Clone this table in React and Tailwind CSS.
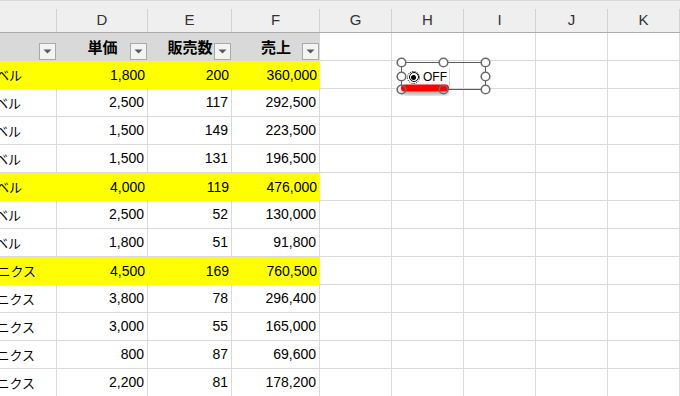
import React from 'react';

const COLS = ['', 'D', 'E', 'F', 'G', 'H', 'I', 'J', 'K'];
const GRID = 'grid grid-cols-[57px_91px_84px_88px_72px_72px_72px_72px_72px]';

const rows = [
  { name: 'トラベル', price: '1,800', qty: '200', total: '360,000', hi: true },
  { name: 'トラベル', price: '2,500', qty: '117', total: '292,500' },
  { name: 'トラベル', price: '1,500', qty: '149', total: '223,500' },
  { name: 'トラベル', price: '1,500', qty: '131', total: '196,500' },
  { name: 'トラベル', price: '4,000', qty: '119', total: '476,000', hi: true },
  { name: 'トラベル', price: '2,500', qty: '52', total: '130,000' },
  { name: 'トラベル', price: '1,800', qty: '51', total: '91,800' },
  { name: 'エレクトロニクス', price: '4,500', qty: '169', total: '760,500', hi: true },
  { name: 'エレクトロニクス', price: '3,800', qty: '78', total: '296,400' },
  { name: 'エレクトロニクス', price: '3,000', qty: '55', total: '165,000' },
  { name: 'エレクトロニクス', price: '800', qty: '87', total: '69,600' },
  { name: 'エレクトロニクス', price: '2,200', qty: '81', total: '178,200' },
];

function FilterButton() {
  return (
    <div className="col-start-1 row-start-1 self-end justify-self-end mr-px mb-px w-[17px] h-[17px] border border-[#a9a9a9] bg-[#f3f3f3] flex items-center justify-center">
      <svg width="9" height="5" viewBox="0 0 9 5">
        <path d="M0.5 0.5 L8.5 0.5 L4.5 4.5 Z" fill="#595959" />
      </svg>
    </div>
  );
}

function FilterCell({ label }) {
  return (
    <div className="grid h-[28px] bg-[#d9d9d9]">
      {label && (
        <span className="col-start-1 row-start-1 place-self-center font-bold text-[15px] text-black font-['Noto_Sans_CJK_JP',sans-serif]">
          {label}
        </span>
      )}
      <FilterButton />
    </div>
  );
}

function EmptyCells({ n }) {
  return Array.from({ length: n }).map((_, i) => (
    <div key={i} className="h-[28px] border-r border-b border-[#dadada] bg-white" />
  ));
}

function DataRow({ r }) {
  const cell = r.hi
    ? 'h-[28px] bg-[#ffff00]'
    : 'h-[28px] border-r border-b border-[#dadada] bg-white';
  const mr = r.name === 'トラベル' ? 'mr-[35px]' : 'mr-[21px]';
  return (
    <>
      <div className={`${cell} flex items-center justify-end overflow-hidden`}>
        <span className={`${mr} whitespace-nowrap text-[13px] text-black font-['Noto_Sans_CJK_JP',sans-serif]`}>{r.name}</span>
      </div>
      <div className={`${cell} flex items-center justify-end pr-[3px] text-[14px] text-black`}>{r.price}</div>
      <div className={`${cell} flex items-center justify-end pr-[3px] text-[14px] text-black`}>{r.qty}</div>
      <div className={`${cell} flex items-center justify-end pr-[3px] text-[14px] text-black`}>{r.total}</div>
      <EmptyCells n={5} />
    </>
  );
}

function RadioControl() {
  const handles = [
    [6, 6], [48, 6], [90, 6],
    [6, 20], [90, 20],
    [6, 33], [48, 33], [90, 33],
  ];
  return (
    <div className="absolute left-[395px] top-[56px] w-[97px] h-[40px]">
      <div className="absolute left-[12px] top-[12px] flex items-center gap-[3px] bg-white pr-[2px] border-r border-[#d8d8d8]">
        <span className="w-[13px] h-[13px] rounded-full border border-dotted border-black flex items-center justify-center">
          <span className="w-[10px] h-[10px] rounded-full border border-black flex items-center justify-center">
            <span className="w-[5px] h-[5px] rounded-full bg-black" />
          </span>
        </span>
        <span className="text-[12px] leading-[18px] text-black">OFF</span>
      </div>
      <svg className="absolute inset-0" width="97" height="40" viewBox="0 0 97 40">
        <defs>
          <filter id="sh" filterUnits="userSpaceOnUse" x="0" y="20" width="70" height="20">
            <feDropShadow dx="0" dy="3" stdDeviation="2" floodColor="#000" floodOpacity="0.35" />
          </filter>
        </defs>
        <rect x="6.5" y="6.5" width="84" height="27" fill="none" stroke="#5c5c5c" strokeWidth="1" />
        {handles.map(([x, y], i) => (
          <circle key={i} cx={x + 0.5} cy={y + 0.5} r="4.3" fill="#fff" />
        ))}
        <rect x="6" y="28.5" width="48" height="7" rx="3.5" fill="#ff0000" filter="url(#sh)" />
        {handles.map(([x, y], i) => (
          <circle key={i} cx={x + 0.5} cy={y + 0.5} r="4.3" fill="none" stroke="#6b6b6b" strokeWidth="1.6" />
        ))}
      </svg>
    </div>
  );
}

export default function App() {
  return (
    <div className="relative w-[680px] h-[396px] overflow-hidden bg-white font-['Liberation_Sans',sans-serif]">
      <div className={`${GRID} h-[33px] bg-[#efefef] border-t border-b border-t-[#d9d9d9] border-b-[#ababab]`}>
        {COLS.map((c, i) => (
          <div key={i} className="flex items-end">
            <div className="h-[23px] w-full border-r border-[#d2d2d2] flex items-center justify-center text-[15px] text-[#333]">
              {c}
            </div>
          </div>
        ))}
      </div>

      <div className={GRID}>
        <FilterCell />
        <FilterCell label="単価" />
        <FilterCell label="販売数" />
        <FilterCell label="売上" />
        <EmptyCells n={5} />
        {rows.map((r, i) => (
          <DataRow key={i} r={r} />
        ))}
      </div>

      <RadioControl />
    </div>
  );
}
